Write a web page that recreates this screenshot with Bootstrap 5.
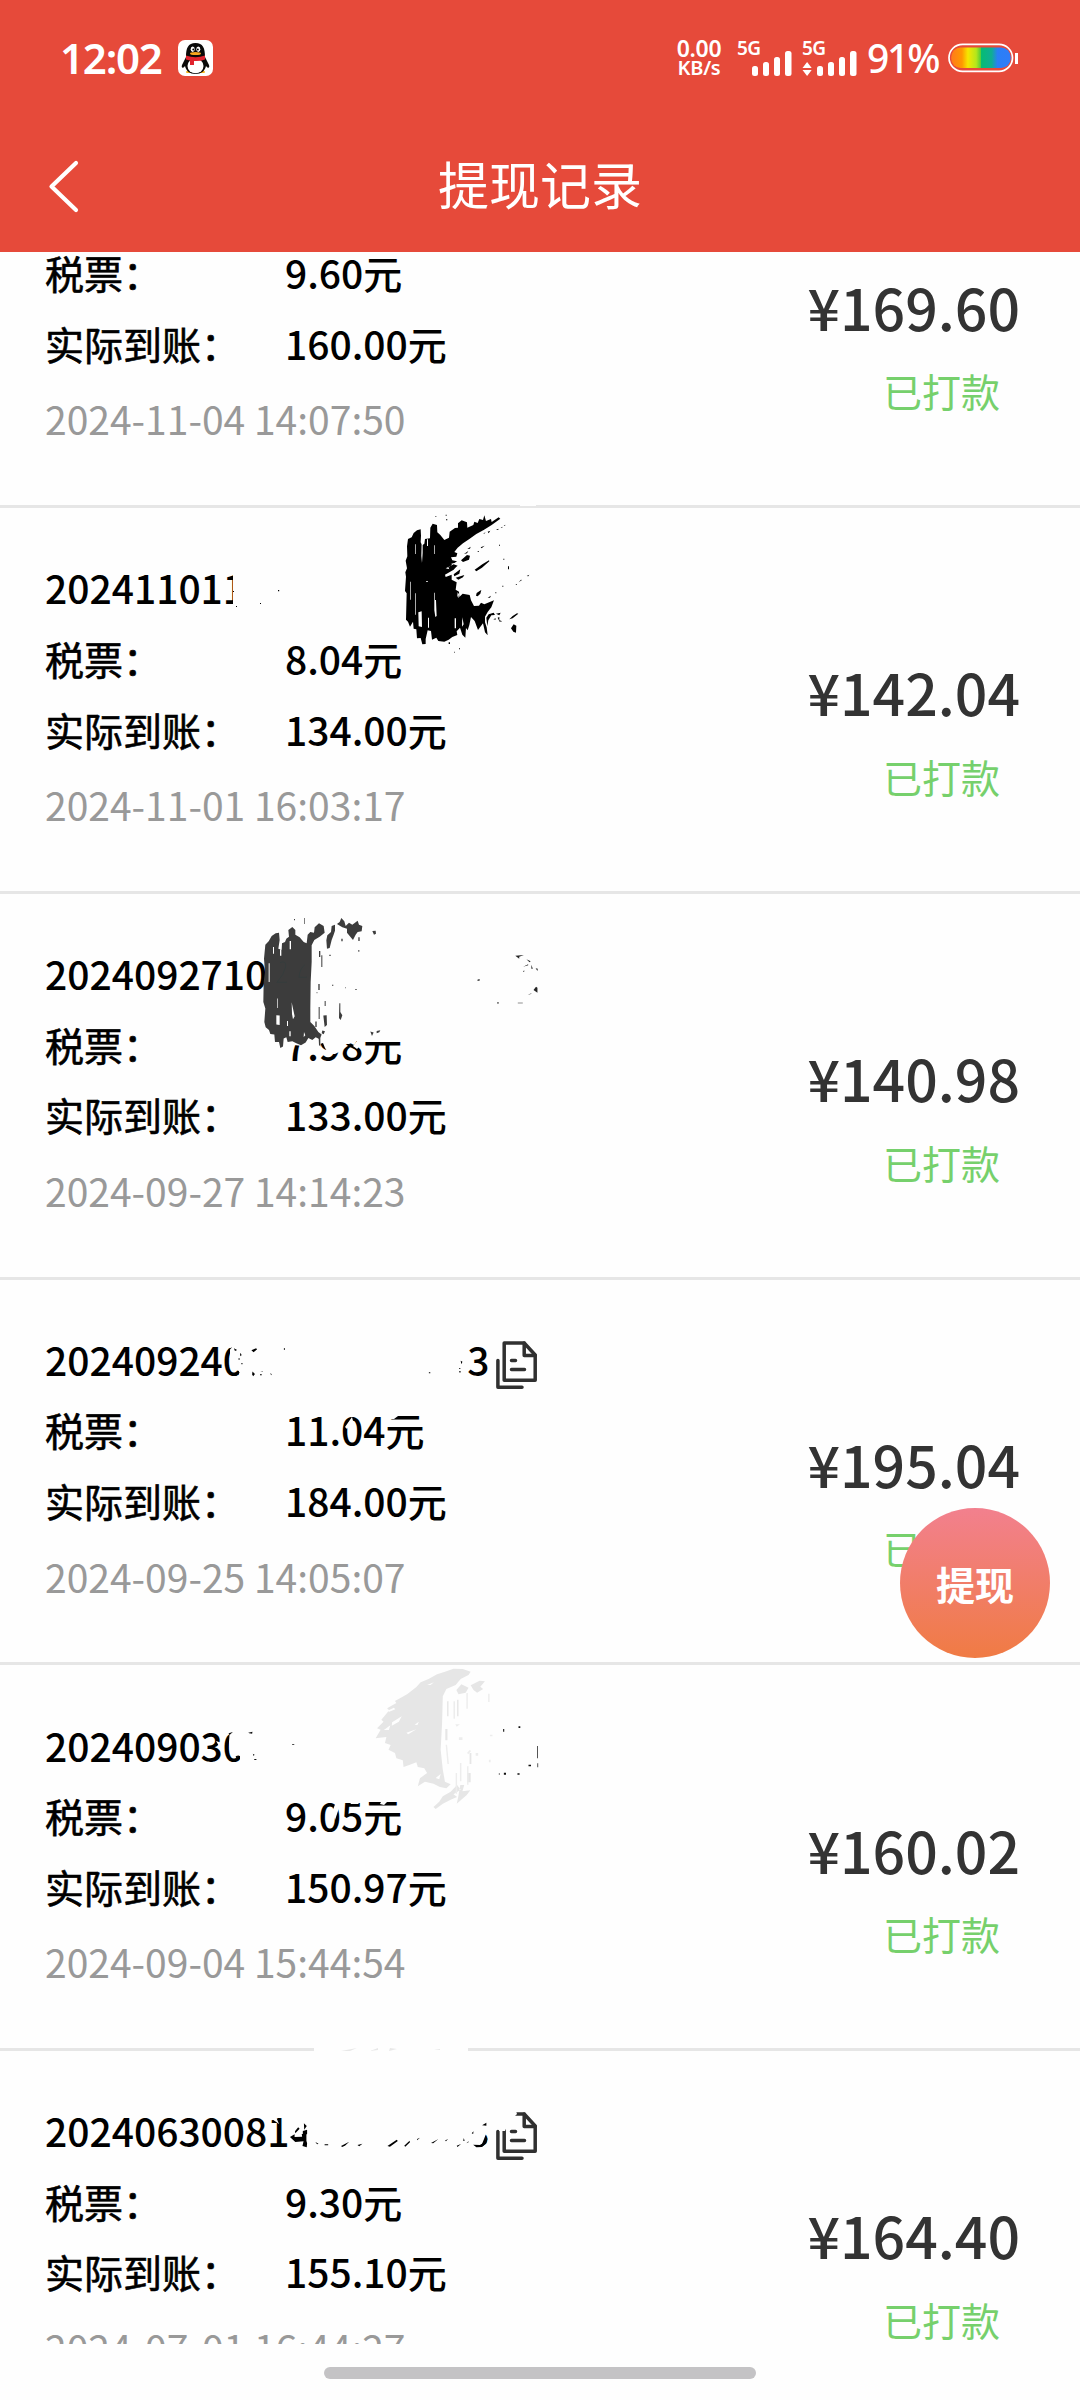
<!DOCTYPE html>
<html lang="zh-CN">
<head>
<meta charset="utf-8">
<meta name="viewport" content="width=device-width, initial-scale=1">
<title>提现记录</title>
<link rel="stylesheet" href="https://cdn.jsdelivr.net/npm/bootstrap@5.3.0/dist/css/bootstrap.min.css">
<style>
body{width:1080px;height:2400px;overflow:hidden;background:#fefefe;color:#000;font-family:"Noto Sans CJK SC","Noto Sans",sans-serif;font-size:39px;line-height:57px}
svg{display:block;flex:none}
.app-head{height:252px;background:#e64a3a;color:#fff}
.status-bar{height:116px;font-family:"Noto Sans",sans-serif;font-weight:600;padding-left:60px;padding-right:61px}
.clock{font-size:42px;width:118px;letter-spacing:-1.2px;line-height:116px}
.qq{margin-top:40px}
.signal{margin-top:39px}
.battery{margin-top:43px}
.rate{width:58px;padding-top:38px;margin-right:2px;text-align:center}
.rate span{display:block;font-size:23px;line-height:20px;letter-spacing:-.3px}
.rate span+span{font-size:20px;line-height:19px}
.pct{font-size:39px;width:81px;line-height:116px;letter-spacing:-2.2px;font-weight:500}
.title-bar{height:136px}
.title-bar h1{font-size:51px;font-weight:400;line-height:74px;padding-top:6px}
.back{left:47px;top:43px}
.records{height:2091.5px;overflow:hidden}
.record{height:385.7px;border-top:3px solid #e6e6e6;padding:51.2px 60px 0 45px}
.record-partial{margin-top:-132.4px}
.line{height:57px;margin-bottom:13.6px;font-weight:500;white-space:nowrap}
.label-col{width:240px;font-weight:400;-webkit-text-stroke:.6px #000}
.order-no{width:444.5px}
.copy{margin:10px 0 0 6.5px}
.when{color:#999;margin-top:18.5px;white-space:nowrap}
.sum{font-size:57.2px;line-height:84px;font-weight:500;color:#333;padding-top:90px}
.paid{color:#76d06c;padding-right:20px;margin-top:14.5px}
.scratch{left:0;top:-3px;pointer-events:none}
.fab{left:900px;top:1508px;width:150px;height:150px;background:linear-gradient(#f2808e,#f07b44);color:#fff;font-weight:700;font-size:39px;line-height:57px}
.home-bar{width:432px;height:12px;margin-top:23.5px;background:#c4c3c5}
</style>
<script src="https://cdn.jsdelivr.net/npm/bootstrap@5.3.0/dist/js/bootstrap.bundle.min.js"></script>
</head>
<body class="position-relative m-0">
<svg width="0" height="0" class="position-absolute">
  <symbol id="copy" viewBox="0 0 41 48"><g fill="none" stroke="#303030" stroke-width="3.500" stroke-linecap="round" stroke-linejoin="round"><path d="M8.200 2h20l11 12v25.300H8.200z"/><path d="M28.200 2v12.500h11M1.900 19.500v26.700H26M15.500 19.500h4M15.500 28.500h13"/></g></symbol>
</svg>

<header class="app-head">
  <div class="status-bar d-flex">
    <div class="clock">12:02</div>
    <svg class="qq" width="35" height="36" viewBox="0 0 35 36">
      <rect width="35" height="36" rx="7" fill="#fff"/>
      <path d="M9 33c-2-1-1-2 2-3h13c3 1 4 2 2 3z" fill="#f6b51e"/>
      <path d="M8 17C8 8 10 3 17.500 3S27 8 27 17l4 8c1 3-1 4-3 1-1 5-5 8-10.500 8S8 31 7 26c-2 3-4 2-3-1z" fill="#090909"/>
      <ellipse cx="17.500" cy="26" rx="8" ry="7.300" fill="#fff"/>
      <path d="M8 15.500q9.500 3.500 19 0v4q-5 2-11 1.500v4h-4v-4.500l-4-1z" fill="#e0232e"/>
      <ellipse cx="14.700" cy="9.300" rx="2" ry="2.700" fill="#fff"/><ellipse cx="20.300" cy="9.300" rx="2" ry="2.700" fill="#fff"/>
      <circle cx="15.300" cy="9.500" r="1" /><circle cx="19.800" cy="9.500" r="1"/>
      <ellipse cx="17.500" cy="13.600" rx="5.500" ry="1.500" fill="#f6a51e"/>
    </svg>
    <div class="rate ms-auto"><span>0.00</span><span>KB/s</span></div>
    <svg class="signal" width="65" height="38" viewBox="0 0 65 38" fill="#fff" font-family="Noto Sans" font-weight="600" font-size="19">
      <text x="7" y="15.500" textLength="24">5G</text>
      <rect x="22" y="27" width="6" height="10" rx="2.500"/><rect x="33" y="23" width="6" height="14" rx="2.500"/><rect x="44" y="18" width="6" height="19" rx="2.500"/><rect x="55" y="12" width="6.500" height="25" rx="2.500"/>
    </svg>
    <svg class="signal" width="72" height="38" viewBox="0 0 72 38" fill="#fff" font-family="Noto Sans" font-weight="600" font-size="19">
      <text x="7" y="15.500" textLength="24">5G</text>
      <path d="M7.500 29l4.600-6 4.600 6zM7.500 31l4.600 6 4.600-6z"/>
      <rect x="22" y="27" width="6" height="10" rx="2.500"/><rect x="33" y="23" width="6" height="14" rx="2.500"/><rect x="44" y="18" width="6" height="19" rx="2.500"/><rect x="55" y="12" width="6.500" height="25" rx="2.500"/>
    </svg>
    <div class="pct">91%</div>
    <svg class="battery" width="71" height="30" viewBox="0 0 71 30">
      <defs><linearGradient id="charge"><stop offset="0" stop-color="#ff7a1c"/><stop offset=".18" stop-color="#ff9800"/><stop offset=".28" stop-color="#f6e600"/><stop offset=".42" stop-color="#b4e61c"/><stop offset=".5" stop-color="#50cc3a"/><stop offset=".5" stop-color="#06bc72"/><stop offset=".68" stop-color="#0fae94"/><stop offset=".78" stop-color="#2a7ff6"/><stop offset="1" stop-color="#2f7cf8"/></linearGradient></defs>
      <rect x="1" y="1.300" width="63.500" height="27" rx="13.500" fill="none" stroke="#fff" stroke-width="1.700"/>
      <rect x="3.200" y="4.500" width="59.500" height="20.500" rx="9.500" fill="url(#charge)"/>
      <rect x="67" y="10" width="3" height="11" fill="#fff"/>
    </svg>
  </div>
  <div class="title-bar position-relative text-center pt-4">
    <svg class="back position-absolute" width="34" height="54" viewBox="0 0 34 54" fill="none" stroke="#fff" stroke-width="4.200" stroke-linecap="round" stroke-linejoin="round"><path d="M29 4L4.500 27.500 29 51"/></svg>
    <h1 class="m-0">提现记录</h1>
  </div>
</header>

<main class="records">
  <section class="record record-partial position-relative d-flex justify-content-between">
    <div><div class="line"></div>
      <div class="line d-flex"><div class="label-col">税票：</div><div>9.60元</div></div>
      <div class="line d-flex"><div class="label-col">实际到账：</div><div>160.00元</div></div>
      <div class="when">2024-11-04 14:07:50</div></div>
    <div class="text-end"><div class="sum">¥169.60</div><div class="paid">已打款</div></div>
  </section>

  <section class="record position-relative d-flex justify-content-between">
    <div><div class="line">2024110111</div>
      <div class="line d-flex"><div class="label-col">税票：</div><div>8.04元</div></div>
      <div class="line d-flex"><div class="label-col">实际到账：</div><div>134.00元</div></div>
      <div class="when">2024-11-01 16:03:17</div></div>
    <div class="text-end"><div class="sum">¥142.04</div><div class="paid">已打款</div></div>
    <svg class="scratch position-absolute overflow-visible" width="560" height="380" viewBox="0 0 560 380">
      <path d="M233 65h60v45h-60zM368 147l4 2 7-1 2 1 14-1v-3h-27zM520 0h16v1h-16z" fill="#fefefe"/>
      <path d="M233 86h1v1h-1zM260 98h1v1h-1zM278 85h1.200v1.200H278zM236 101h1v1h-1z"/>
      <g transform="translate(395 0) scale(.3333)">
        <path d="M39 102L50 97 56 84 66 76 77 73 78 92 77 112 82 121 88 116 90 102 105 100 106 68 113 56 126 60 127 82 136 90 148 105 162 98 164 80 180 69 189 68 189 55 200 46 216 52 217 68 235 60 238 50 248 54 253 42 264 45 268 31 273 48 288 42 290 51 311 37 316 41 290 60 266 75 244 87 222 103 204 115 188 128 178 141 187 145 184 155 168 157 172 166 186 169 169 182 152 190 164 193 184 184 176 194 150 209 152 216 170 209 170 224 185 232 182 254 192 260 193 276 203 266 224 270 228 286 237 303 252 302 258 293 268 298 297 286 289 307 278 321 270 335 270 352 275 367 278 391 270 382 264 355 249 375 239 348 228 336 223 360 218 376 213 369 211 398 202 389 195 368 185 379 187 390 172 396 161 404 148 410 130 408 124 398 111 404 108 378 98 376 92 402 92 417 82 418 77 399 66 400 64 373 56 371 54 350 45 365 39 350 33 344 35 265 30 258 33 215 31 202 36 190 32 167 37 154 36 124Z"/>
        <path d="M61 118h2v29h-2zM80 110h3v34l-2 30-2-21zM96 103h3v20h-3zM61 265h2v64h-2zM70 322l10-3 1 47-10-2zM118 263h2v22h3l2 48-4 3-3-20zM117 121h2v26h-2zM99 338h3v30h-3zM179 340h4v30h-4zM46 230h2v54h-2zM202 337l4 21-5 7zM93 229h6v2h-6zM156 190l15-10-2-4 17-4-12 14-12 4zM188 262l4 6-2 12-3-8z" fill="#fefefe"/>
        <path d="M198 166l18-16 9 2-3 12-18 7zM160 186l16-8 12 4-12 10-12 4zM176 208l20-15-3 13-15 8zM182 218l26-8-4 7-14 7zM239 194l23-16 20-12 1 3-22 19-17 11zM217 132l10-7-2 6zM207 147l13-9-4 7zM257 127l12-5-9 8zM248 138h4v2h-4zM264 87l7-5-1 3zM278 80l8-3-5 8zM303 75l7-4v4zM317 69l5-4v3zM326 62l6-3-3 4zM312 119h3v3h-3zM325 161h3v3h-3zM339 184h3v9h-3zM361 240l5-3v3zM371 232l7-8 3 1zM395 213l8-4-3 5zM322 242h3v3h-3zM301 262h3v3h-3zM245 264l10-7 4-2-3 11-8 8-5-2zM278 278l10-6-3 6zM274 338l7-10 15-5 4 7-11 1-9 15-3 18zM303 326l14-3-4 8zM295 343l7-3v4zM308 338l5-2v10l9 3-8 1zM343 343l10-10 13-8 4 1-17 14zM348 370l8-12 8 4-1 21-8-3zM121 33h3v2h-3zM152 29h3v3h-3zM153 43h4v3h-4zM161 412h4v5h-4zM178 440h2v3h-2zM192 430h3v3h-3z"/>
      </g>
    </svg>
  </section>

  <section class="record position-relative d-flex justify-content-between">
    <div><div class="line">20240927101</div>
      <div class="line d-flex"><div class="label-col">税票：</div><div>7.98元</div></div>
      <div class="line d-flex"><div class="label-col">实际到账：</div><div>133.00元</div></div>
      <div class="when">2024-09-27 14:14:23</div></div>
    <div class="text-end"><div class="sum">¥140.98</div><div class="paid">已打款</div></div>
    <svg class="scratch position-absolute" width="560" height="380" viewBox="0 0 560 380">
      <path d="M280 134h126v15l-6 1-3-2-4 2-4-3-8 1-8-1-3 2-5 1-8 8-4-3 4-5-8 3-4 0-6 8-4 2-6 0-4-6-2-5-12 4-17-2z" fill="#fefefe"/>
      <g transform="translate(255 14.300) scale(.3333)">
        <path fill="#3c3c3c" d="M31 118L41 108 50 92 62 84 72 82 74 104 70 130 80 133 81 114 90 110 94 100 102 94 100 74 112 65 121 74 121 88 134 96 146 110 155 114 158 88 166 80 177 82 179 66 192 54 206 62 209 82 194 94 178 104 170 120 170 170 167 230 166 310 166 350 178 362 190 380 200 388 194 402 182 396 172 404 160 398 152 412 138 420 124 414 112 408 98 410 94 396 86 400 84 424 76 428 72 410 60 410 58 388 46 386 42 374 32 366 28 350 31 310 25 290 26 230 30 200 27 160ZM214 105L217 90 228 80 230 62 240 58 240 76 236 88 230 104 224 128 216 130ZM246 56L254 50 259 38 268 48 272 62 282 52 292 58 308 46 312 58 322 62 320 78 308 80 302 88 294 104 284 92 276 82 276 70 262 66ZM352 77l10-1 1 9-6 3z"/>
        <path fill="#fefefe" d="M54 125h3v20h-3zM75 132h4v19h-4zM104 107h4v25h-4zM41 174h3v56h-3zM110 291l3 14 6 28-5 9-3-16zM64 330l10 1v28l-10-1zM67 280h2v28h-2zM96 347h3v15h-3zM103 378h4v15h-4zM147 380l4 10-5 5z"/>
        <path fill="#3c3c3c" d="M192 137h4v18h-4zM199 150h3v35h-3zM190 236h4v18h-4zM191 305h3v36h-3zM205 331l10-1 1 29-7 6zM209 287h3v15h-3zM253 294h3v26l6 10-5 14-5-6zM202 376l8 2-4 9-6-3zM191 397h5v27l-4-5zM223 148h4v4h-4zM259 100h4v8h-4zM310 96h4v11h-4zM310 134h3v5h-3zM231 238h4v3h-4zM270 246h2v3h-2zM301 251h4v3h-4zM181 349h4v16h-4zM185 260h2v4h-2zM117 41h3v4h-3zM148 38h2v18h-2zM346 379l10 3-5 10zM365 377l11-2-3 6-8 3z"/>
        <g fill="none" stroke="#353c3c" stroke-width="3"><path d="M75 172q20-8 17 13-5 23-26 46h30M150 178q-16 12-18 38h24"/></g>
      </g>
      <g transform="translate(0 -1) scale(.3571 .3333)" fill="#252525"><path d="M1337 269l6-2v5h-6zM1443 197l24-2-13 5v6zM1474 208l12 6-3 3zM1465 230l14-7v3zM1488 224l4 12h-4zM1500 235l6 1-1 7zM1464 245l4-4v4zM1494 300l7-10 4 3v15zM1478 314l12-5-5 4zM1450 338h14v2h-14zM1393 336h3v5h-3z"/></g>
    </svg>
  </section>

  <section class="record position-relative d-flex justify-content-between">
    <div><div class="line d-flex"><div class="order-no d-flex justify-content-between"><span>2024092401</span><span>3</span></div><svg class="copy" width="41" height="48"><use href="#copy"/></svg></div>
      <div class="line d-flex"><div class="label-col">税票：</div><div>11.04元</div></div>
      <div class="line d-flex"><div class="label-col">实际到账：</div><div>184.00元</div></div>
      <div class="when">2024-09-25 14:05:07</div></div>
    <div class="text-end"><div class="sum">¥195.04</div><div class="paid">已打款</div></div>
    <svg class="scratch position-absolute" width="560" height="380" viewBox="0 0 560 380">
      <path fill="#fefefe" d="M230 66l0 14 1 12 8 2v8h36V65zM345 150l7-10 1 4-6 8zM390 139h8l-4 3h-6z"/>
      <g transform="translate(0 3.300) scale(.3571 .3333)"><path d="M639 206l11-5-9 10zM655 204l9 5-6 3zM672 217l5 7-4 4zM668 234h3v4h-3zM676 248h3v4h-3zM666 276l6 1-11 10-4-2zM704 210l13-6 3 3-10 9zM707 274l7 7-5 7-3-5zM729 273l7-1v2zM728 282h5v3h-5zM757 278l4 4-2 3zM795 204h3v4h-3zM1201 276h4v3h-4zM1290 241l5 3-3 8zM1286 263h3v3h-3zM1285 272l6 2-3 4z"/></g>
    </svg>
  </section>

  <section class="record position-relative d-flex justify-content-between">
    <div><div class="line">202409030</div>
      <div class="line d-flex"><div class="label-col">税票：</div><div>9.05元</div></div>
      <div class="line d-flex"><div class="label-col">实际到账：</div><div>150.97元</div></div>
      <div class="when">2024-09-04 15:44:54</div></div>
    <div class="text-end"><div class="sum">¥160.02</div><div class="paid">已打款</div></div>
    <svg class="scratch position-absolute" width="560" height="380" viewBox="0 0 560 380">
      <path fill="#fefefe" d="M230 66l-1 14 1 12 10 2v8h22V65zM216 79l6 2-3 3zM332 150l4-10h3v6l-4 12zM349 139h12l-3 3h-7zM381 140h6l-3 3-4-1z"/>
      <g transform="translate(0 -12.300) scale(.3571 .3333)">
        <path fill="#111" d="M640 251l12-4-9 9zM695 249l12-3-1 6-8-1zM660 319l9-1-7 11zM708 312l5 3-3 4zM712 328h6v3h-6zM818 283h6v2h-6zM1409 238h3v8h-3zM1452 230h5v5h-5zM1504 289h2v37h-2zM1505 341h2v12h-2zM1480 345h7v5h-7zM1411 369h6v6h-6zM1449 371h6v4h-6zM1397 371h2v4h-2z"/>
        <path fill="#e6e6e6" d="M1052 266L1066 240 1056 236 1074 216 1068 210 1090 182 1084 176 1110 160 1106 154 1140 134 1166 112 1178 98 1200 88 1224 74 1246 66 1270 57 1296 58 1318 66 1312 76 1290 88 1276 106 1250 118 1240 140 1238 220 1234 300 1240 360 1246 396 1262 404 1250 416 1232 412 1214 402 1190 396 1170 410 1176 386 1196 370 1188 356 1170 352 1166 338 1146 346 1130 352 1128 332 1110 326 1106 310 1088 300 1094 286 1078 280 1082 262ZM1278 121l14-17 20 10-8 15-20 5zM1318 107l25-14 15 2-13 16 8 7-17 11-10-8zM1280 406L1262 426 1240 440 1230 456 1214 472 1220 478 1240 462 1262 450 1280 442 1270 434 1290 420ZM1289 406h11l-5 19 22-3-10 14-28 26 4-19zM1308 370h10v28h-10zM1315 310h5v33h-5zM1252 155h4v45h-4zM1280 150h4v50h-4zM1247 238h6v34h-6z"/>
        <path fill="#fefefe" d="M1098 218l27-18-8 16-20 12zM1138 249l28-10-23 15zM1085 183l18-9 4 5-17 7zM1075 241l18-14-4 14zM1161 225l12-9-4 10zM1196 106l19-8-9 8zM1220 385l14-12-4 16z"/>
        <path fill="none" stroke="#ededed" stroke-width="4" d="M1272 155v52M1250 285l5 58M1290 340v55M1308 130v47M1369 132v25M1310 350v55M1278 370v62"/>
        <path fill="#ededed" d="M1275 224h13l-9 7zM1285 263h10v8h-10zM1308 309l8-9 3 5-8 9zM1332 310h7v8h-7zM1372 255h7v5h-7zM1369 330h5v8h-5z"/>
      </g>
    </svg>
  </section>

  <section class="record position-relative d-flex justify-content-between">
    <div><div class="line d-flex"><div class="order-no d-flex justify-content-between"><span>202406300814</span><span>3</span></div><svg class="copy" width="41" height="48"><use href="#copy"/></svg></div>
      <div class="line d-flex"><div class="label-col">税票：</div><div>9.30元</div></div>
      <div class="line d-flex"><div class="label-col">实际到账：</div><div>155.10元</div></div>
      <div class="when">2024-07-01 16:44:27</div></div>
    <div class="text-end"><div class="sum">¥164.40</div><div class="paid">已打款</div></div>
    <svg class="scratch position-absolute overflow-visible" width="560" height="380" viewBox="0 0 560 380">
      <path fill="#fefefe" d="M314-1h154v5H314zM288 66h24v38h-24zM466 68h23l-3 18-4 10-8 4-9 3zM500 60h15l2 6-8 8-4 9h-6zM272 71l4-2 3 7z"/>
      <path fill="#e8e8e8" d="M341 3l16-3-7 3zM370 3l8-3v2zM390 0l7 1-8 2zM434 2l6-1v1z"/>
      <g transform="translate(0 -8) scale(.3571 .3333)"><path d="M826 274l9-12 4 4-12 14zM851 250l8 8-7 11zM848 273l12-4v14h-12zM812 291l13-8v8l21-1-1-8h13v20l2 8-1 12-12-4 3-14-23 2zM883 306l9 5-4 2zM909 313h10v3h-10zM955 318l23-13-12 12-8 4zM1001 315l14-4-9 8zM1085 318l26-19 3 4-22 17zM1132 317l15-15 1 5-13 13zM1168 297l8-4-8 8zM1207 309l21-12-15 13zM1246 302l9-6-6 8zM1279 317l12-5-10 9zM1306 310l6-6v3zM1297 302l2-8 2 9zM1321 280l5-6-1 8zM1350 256l12-8v9zM1325 314l20 1 12-10 2-17 6 8-3 14-12 11-16 1z"/></g>
    </svg>
  </section>
</main>
<button class="fab btn rounded-circle border-0 p-0 position-absolute">提现</button>
<div class="home-bar mx-auto rounded-pill"></div>
</body>
</html>
